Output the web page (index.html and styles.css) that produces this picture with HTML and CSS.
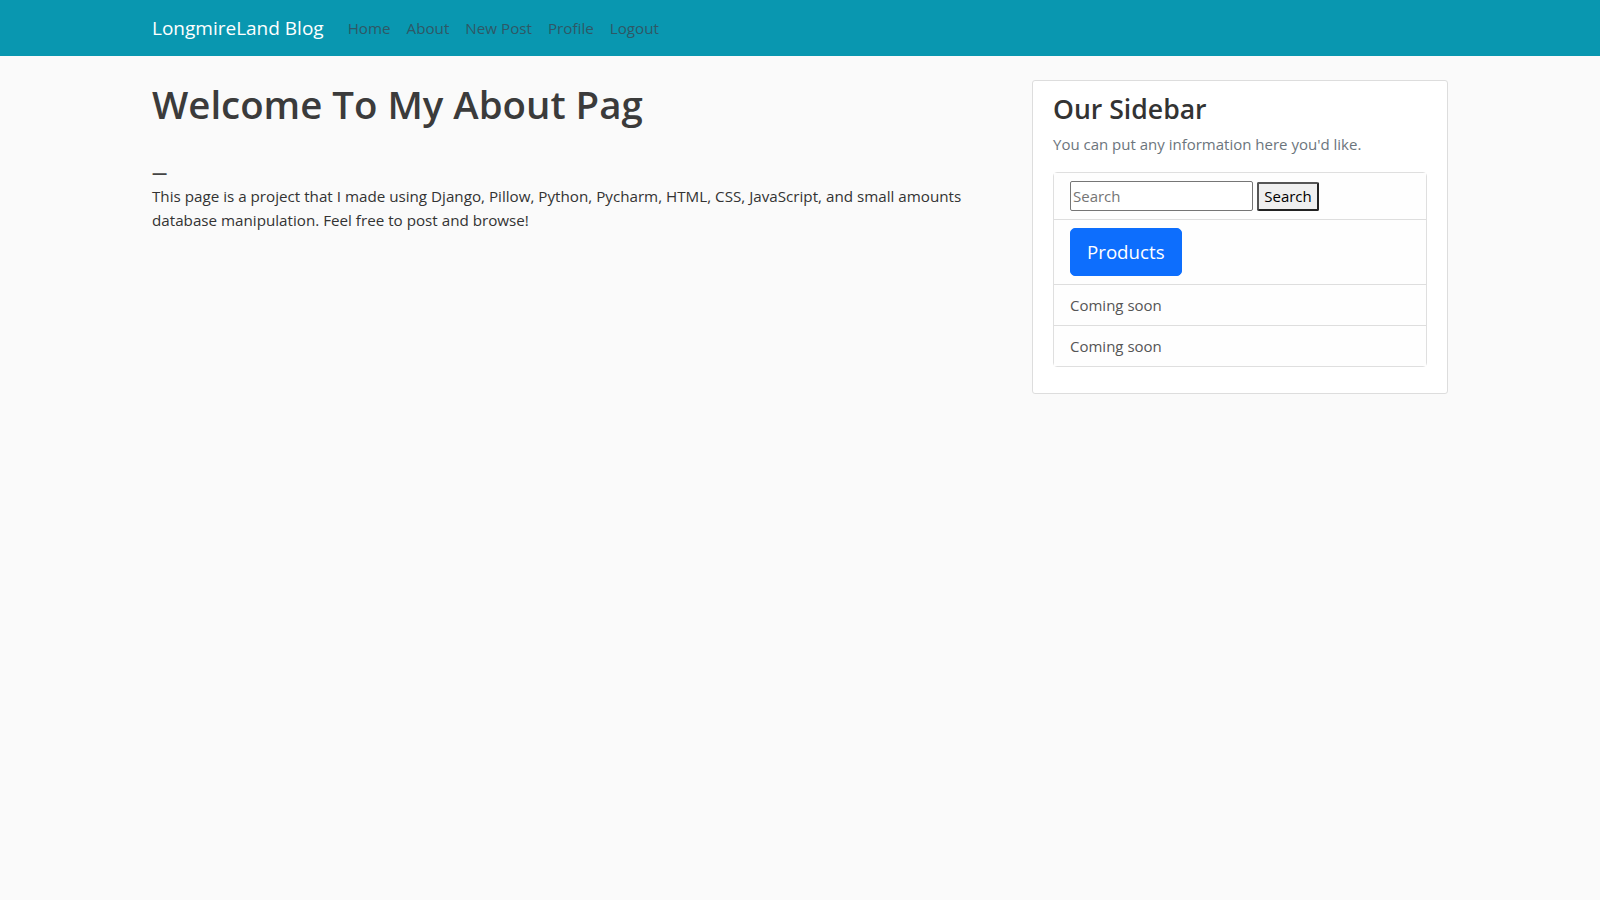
FILE: index.html
```html
<!DOCTYPE html>
<html lang="en">
<head>
<meta charset="utf-8">
<title>About - LongmireLand Blog</title>
<link rel="stylesheet" href="styles.css">
</head>
<body>
<header class="site-header">
  <nav class="navbar">
    <div class="container nav-inner">
      <a class="brand" href="#">LongmireLand Blog</a>
      <div class="nav-links">
        <a class="nav-link" href="#">Home</a>
        <a class="nav-link" href="#">About</a>
        <a class="nav-link" href="#">New Post</a>
        <a class="nav-link" href="#">Profile</a>
        <a class="nav-link" href="#">Logout</a>
      </div>
    </div>
  </nav>
</header>
<main class="container main">
  <div class="row">
    <section class="col-main">
      <h1 class="page-title">Welcome To My About Pag</h1>
      <div class="about-text">
        <div class="spacer-line"></div>
        <div class="dash-line">—</div>
        <p>This page is a project that I made using Django, Pillow, Python, Pycharm, HTML, CSS, JavaScript, and small amounts database manipulation. Feel free to post and browse!</p>
      </div>
    </section>
    <aside class="col-side">
      <div class="content-section">
        <h3 class="side-title">Our Sidebar</h3>
        <p class="text-muted">You can put any information here you'd like.</p>
        <ul class="list-group">
          <li class="list-group-item">
            <form class="search-form">
              <input class="search-input" type="text" placeholder="Search">
              <button class="search-btn" type="button">Search</button>
            </form>
          </li>
          <li class="list-group-item">
            <a class="btn-products" href="#">Products</a>
          </li>
          <li class="list-group-item">Coming soon</li>
          <li class="list-group-item">Coming soon</li>
        </ul>
      </div>
    </aside>
  </div>
</main>
</body>
</html>
```
FILE: styles.css
```css
* { box-sizing: border-box; }

body {
  margin: 0;
  background: #fafafa;
  color: #333333;
  font-family: "Open Sans", "Noto Sans", "Liberation Sans", sans-serif;
  font-size: 16px;
  line-height: 1.5;
}

a { text-decoration: none; }

.container {
  max-width: 1320px;
  margin: 0 auto;
  padding: 0 12px;
}

.navbar {
  background: #0997b0;
  height: 56px;
}

.nav-inner {
  display: flex;
  align-items: center;
  height: 56px;
}

.brand {
  color: #ffffff;
  font-size: 19px;
  margin-right: 16px;
  padding: 5px 0;
}

.nav-links { display: flex; }

.nav-link {
  color: #2f5866;
  font-size: 15.2px;
  padding: 8px;
}

.main { padding-top: 24px; }

.row {
  display: grid;
  grid-template-columns: 856px 416px;
  column-gap: 24px;
}

.page-title {
  margin: 0 0 8px;
  font-size: 38.4px;
  font-weight: 600;
  line-height: 48px;
  color: #3b3b3b;
}

.about-text { font-size: 15.2px; color: #333; }

.spacer-line { height: 24px; }

.dash-line {
  height: 24px;
  line-height: 24px;
  font-weight: 700;
  color: #444;
}

.about-text p { margin: 0 0 16px; line-height: 24px; }

.content-section {
  background: #ffffff;
  border: 1px solid #dddddd;
  border-radius: 3px;
  padding: 10px 20px;
}

.side-title {
  margin: 0 0 8px;
  padding-top: 3px;
  font-size: 26.6px;
  font-weight: 600;
  line-height: 30px;
  color: #333;
}

.text-muted {
  color: #6c757d;
  margin: 0 0 16px;
  font-size: 15px;
  line-height: 24px;
}

.list-group {
  list-style: none;
  margin: 0 0 16px;
  padding: 0;
  border: 1px solid rgba(0,0,0,.125);
  border-radius: 4px;
}

.list-group-item {
  padding: 8px 16px;
  background: #fefefe;
  color: #555;
  font-size: 15px;
  line-height: 24px;
}

.list-group-item + .list-group-item {
  border-top: 1px solid rgba(0,0,0,.125);
}

.search-form {
  display: flex;
  align-items: center;
  gap: 4px;
  height: 30px;
}

.search-input {
  width: 183px;
  height: 30px;
  border: 1px solid #767676;
  border-radius: 2px;
  padding: 1px 2px;
  font-family: inherit;
  font-size: 15px;
  color: #333;
  background: #fff;
}

.search-input::placeholder { color: #757575; }

.search-btn {
  height: 29px;
  width: 62px;
  padding: 0;
  font-family: inherit;
  font-size: 15px;
  color: #000;
  background: #efefef;
  border: 2px solid #222;
  border-left-color: #555;
  border-top-color: #555;
  border-radius: 2px;
}

.btn-products {
  display: inline-block;
  background: #0d6efd;
  color: #ffffff;
  font-size: 18.7px;
  line-height: 30px;
  padding: 8px 16px;
  border: 1px solid #0d6efd;
  border-radius: 5px;
}
```
